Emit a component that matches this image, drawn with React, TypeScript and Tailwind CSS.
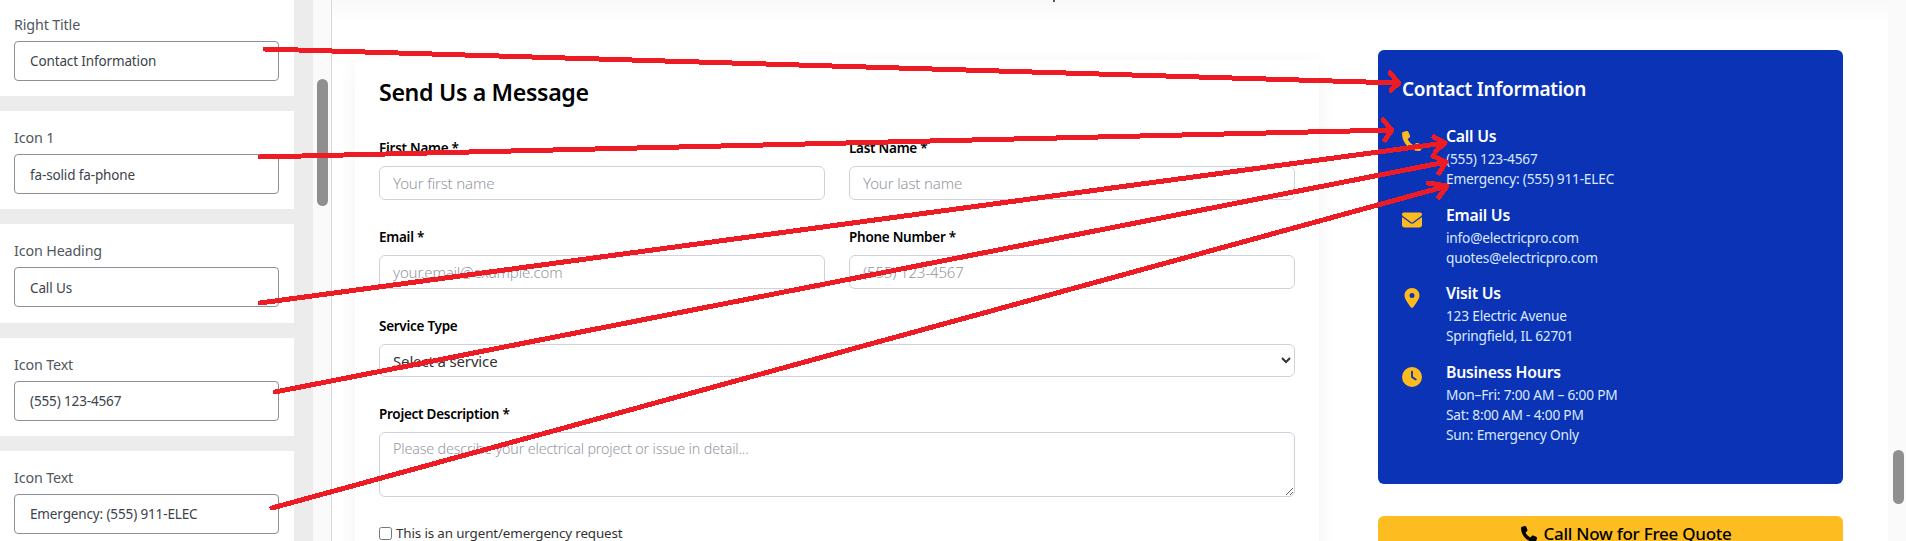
import { FaPhone, FaEnvelope, FaLocationDot, FaClock } from "react-icons/fa6";

const fields = [
  { label: "Right Title", value: "Contact Information" },
  { label: "Icon 1", value: "fa-solid fa-phone" },
  { label: "Icon Heading", value: "Call Us" },
  { label: "Icon Text", value: "(555) 123-4567" },
  { label: "Icon Text", value: "Emergency: (555) 911-ELEC" },
];

const contacts = [
  { icon: <FaPhone />, title: "Call Us", lines: ["(555) 123-4567", "Emergency: (555) 911-ELEC"] },
  { icon: <FaEnvelope />, title: "Email Us", lines: ["info@electricpro.com", "quotes@electricpro.com"] },
  { icon: <FaLocationDot />, title: "Visit Us", lines: ["123 Electric Avenue", "Springfield, IL 62701"] },
  { icon: <FaClock />, title: "Business Hours", lines: ["Mon–Fri: 7:00 AM – 6:00 PM", "Sat: 8:00 AM - 4:00 PM", "Sun: Emergency Only"] },
];

const arrows = [
  { line: "265,49 1399,83", head: "1390,73 1399,83 1391,90" },
  { line: "260,157 1392,130", head: "1383,120 1392,130 1385,140" },
  { line: "260,303 1445,143", head: "1434,137 1445,143 1435,152" },
  { line: "275,392 1446,162", head: "1433,156 1446,162 1439,173" },
  { line: "272,508 1447,186", head: "1428,183 1447,186 1439,197" },
];

function Label({ children }: { children: string }) {
  return <label className="block h-5 text-[13.5px] leading-5 font-semibold text-black mb-2 tracking-[-0.02em]">{children}</label>;
}

function TextField({ placeholder }: { placeholder: string }) {
  return (
    <input
      readOnly
      placeholder={placeholder}
      className="block w-full h-[34px] rounded-[6px] border border-[#d1d1dc] bg-white px-[13px] text-[15px] font-light tracking-[-0.01em] placeholder:text-[#94989f] outline-none"
    />
  );
}

export default function App() {
  return (
    <div className="relative flex h-[541px] w-[1906px] overflow-hidden bg-white font-['Noto_Sans',sans-serif]">
      <aside className="flex w-[294px] shrink-0 flex-col gap-[15px] mt-[-2.33px] bg-[#ececec]">
        {fields.map((f, i) => (
          <div key={i} className="h-[98.33px] shrink-0 bg-white pt-[18px] pl-[14px] pr-[15px]">
            <div className="h-[18px] text-[14.3px] leading-[18px] text-[#50575e] mb-[7px] tracking-[-0.01em]">{f.label}</div>
            <input
              readOnly
              value={f.value}
              className="block h-10 w-full rounded-[4px] border border-[#8c8f94] bg-white pl-[15px] pt-[1px] text-[13.5px] text-[#3c434a] tracking-[-0.01em] outline-none"
            />
          </div>
        ))}
      </aside>
      <div className="w-[19px] shrink-0 bg-[#ececec]" />
      <div className="w-[19px] shrink-0 border-r border-[#d8d8d8] bg-[#fafafa] pl-[4px] pt-[79px]">
        <div className="h-[127px] w-[11px] rounded-[6px] bg-[#8f8f8f]" />
      </div>

      <main className="relative flex-1 min-w-0">
        <div className="h-[25px] bg-gradient-to-b from-[#f9f9f9] to-white" />
        <div className="flex items-start pl-[23px]">
          <section className="mt-[35px] h-[600px] w-[964px] shrink-0 bg-white px-6 pt-4 shadow-[0_4px_20px_rgba(0,0,0,0.05)]">
            <h2 className="h-8 text-[23.2px] leading-8 font-semibold text-black tracking-[-0.015em]">Send Us a Message</h2>
            <div className="mt-[30px] grid grid-cols-2 gap-x-6 gap-y-[27px]">
              <div>
                <Label>First Name *</Label>
                <TextField placeholder="Your first name" />
              </div>
              <div>
                <Label>Last Name *</Label>
                <TextField placeholder="Your last name" />
              </div>
              <div>
                <Label>Email *</Label>
                <TextField placeholder="your.email@example.com" />
              </div>
              <div>
                <Label>Phone Number *</Label>
                <TextField placeholder="(555) 123-4567" />
              </div>
            </div>
            <div className="mt-[27px]">
              <Label>Service Type</Label>
              <select className="block h-[33px] w-full rounded-[6px] border border-[#d1d1dc] bg-white pl-[9px] text-[15px] text-[#333] tracking-[-0.01em] outline-none">
                <option>Select a service</option>
              </select>
            </div>
            <div className="mt-[27px]">
              <Label>Project Description *</Label>
              <textarea
                readOnly
                placeholder="Please describe your electrical project or issue in detail..."
                className="block h-[65px] w-full rounded-[6px] border border-[#d1d1dc] bg-white px-[13px] py-[5px] text-[14.3px] font-light tracking-[-0.01em] placeholder:text-[#94989f] outline-none"
              />
            </div>
            <label className="mt-[26px] flex items-center gap-[4px] text-[13.4px] leading-5 text-[#333] tracking-[-0.01em]">
              <input type="checkbox" readOnly className="m-0 h-[13px] w-[13px]" />
              This is an urgent/emergency request
            </label>
          </section>

          <div className="ml-[59px] mt-[25px] w-[465px] shrink-0">
            <div className="h-[434px] rounded-[6px] bg-[#0a33b5] pl-6 pt-[24px] text-white">
              <h3 className="h-[30px] text-[19px] leading-[30px] font-semibold tracking-[-0.015em]">Contact Information</h3>
              <div className="mt-5 flex flex-col gap-[13.5px]">
                {contacts.map((c) => (
                  <div key={c.title} className="flex gap-6">
                    <div className="flex h-[28px] w-5 shrink-0 items-center justify-center pt-[6px] text-[20px] text-[#fdbb1f]">{c.icon}</div>
                    <div>
                      <div className="h-[25px] text-[15.8px] leading-6 font-semibold tracking-[-0.015em]">{c.title}</div>
                      {c.lines.map((l) => (
                        <div key={l} className="text-[13.7px] leading-5 text-[#dbeafe] tracking-[-0.015em]">{l}</div>
                      ))}
                    </div>
                  </div>
                ))}
              </div>
            </div>
            <button className="mt-8 flex h-9 w-full items-center justify-center gap-[6px] rounded-[6px] bg-[#fdbd21] pl-[32px] text-[17px] font-medium text-black tracking-[-0.015em]">
              <FaPhone className="text-[16px]" />
              Call Now for Free Quote
            </button>
          </div>
        </div>
      </main>

      <div className="w-[18px] shrink-0 bg-[#fafafa] pl-[5px] pt-[450px]">
        <div className="h-[54px] w-[11px] rounded-[6px] bg-[#8f8f8f]" />
      </div>

      <div className="absolute left-[1053px] top-0 h-[2px] w-[2px] bg-[#555]" />

      <svg className="pointer-events-none absolute inset-0" width="1906" height="541" fill="none" stroke="#ed1c24" strokeWidth="5" strokeLinecap="round" strokeLinejoin="round" shapeRendering="crispEdges">
        {arrows.map((a) => (
          <g key={a.line}>
            <polyline points={a.line} />
            <polyline points={a.head} />
          </g>
        ))}
      </svg>
    </div>
  );
}
